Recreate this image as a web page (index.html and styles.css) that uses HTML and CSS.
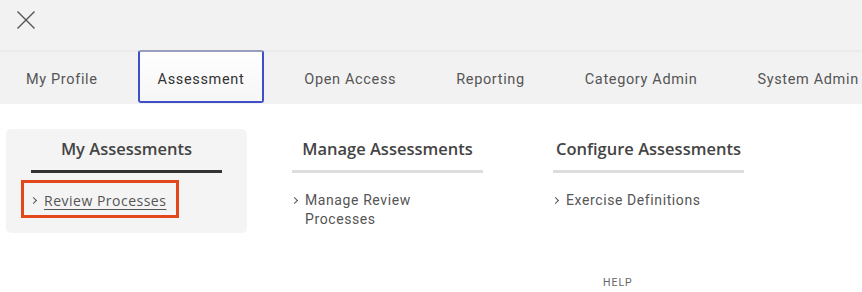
FILE: index.html
```html
<!DOCTYPE html>
<html lang="en">
<head>
  <meta charset="UTF-8">
  <meta name="viewport" content="width=device-width, initial-scale=1.0">
  <title>Assessment Menu</title>
  <link rel="stylesheet" href="styles.css">
</head>
<body>
  <header class="topbar">
    <button class="close-btn" aria-label="Close">
      <svg width="18" height="18" viewBox="0 0 18 18">
        <path d="M0.5 0.5 L17.5 17.5 M17.5 0.5 L0.5 17.5" stroke="#555" stroke-width="1.4" fill="none"/>
      </svg>
    </button>
  </header>

  <nav class="tabs">
    <a class="tab" href="#">My Profile</a>
    <a class="tab active" href="#">Assessment</a>
    <a class="tab" href="#">Open Access</a>
    <a class="tab" href="#">Reporting</a>
    <a class="tab" href="#">Category Admin</a>
    <a class="tab" href="#">System Admin</a>
  </nav>

  <main class="menu">
    <section class="menu-col current">
      <h2>My Assessments</h2>
      <div class="rule"></div>
      <ul>
        <li><a class="item focused" href="#"><span class="chev"></span><span class="label">Review Processes</span></a></li>
      </ul>
    </section>
    <section class="menu-col">
      <h2>Manage Assessments</h2>
      <div class="rule"></div>
      <ul>
        <li><a class="item" href="#"><span class="chev"></span><span class="label">Manage Review<br>Processes</span></a></li>
      </ul>
    </section>
    <section class="menu-col">
      <h2>Configure Assessments</h2>
      <div class="rule"></div>
      <ul>
        <li><a class="item" href="#"><span class="chev"></span><span class="label">Exercise Definitions</span></a></li>
      </ul>
    </section>
  </main>

  <footer class="help">HELP</footer>
</body>
</html>
```

FILE: styles.css
```css
body {
  margin: 0;
  background: #fff;
  font-family: Roboto, "Liberation Sans", sans-serif;
  color: #555;
  overflow: hidden;
}

.topbar {
  height: 50px;
  box-sizing: border-box;
  padding: 11px 0 0 17px;
  background: #f2f2f2;
  box-shadow: 0 1px 3px rgba(0, 0, 0, 0.06);
  position: relative;
  z-index: 1;
}

.close-btn {
  border: none;
  background: none;
  padding: 0;
  display: block;
  cursor: pointer;
}

.close-btn svg {
  display: block;
}

.tabs {
  display: flex;
  align-items: flex-start;
  gap: 20px;
  height: 54px;
  padding-left: 6px;
  background: #f2f2f2;
  white-space: nowrap;
}

.tab {
  display: flex;
  align-items: center;
  box-sizing: border-box;
  height: 53px;
  padding: 5px 18px 0;
  font-size: 14.5px;
  letter-spacing: 0.65px;
  color: #555;
  text-decoration: none;
  border: 2px solid transparent;
}

.tab.active {
  border-color: #3f50c6;
  border-top-color: #9da3c2;
  border-radius: 3px;
  background: linear-gradient(#fff, #f6f6f6);
  color: #333;
}

.menu {
  display: flex;
  align-items: flex-start;
  gap: 20px;
  padding: 25px 0 0 6px;
}

.menu-col {
  width: 191px;
  padding: 9px 25px 15px;
  border-radius: 5px;
}

.menu-col.current {
  background: #f4f4f4;
}

.menu-col h2 {
  margin: 0;
  font-family: "Open Sans", sans-serif;
  font-weight: 600;
  font-size: 16.5px;
  line-height: 22px;
  color: #444;
  text-align: center;
  white-space: nowrap;
}

.rule {
  height: 3px;
  margin-top: 10px;
  background: #ddd;
}

.menu-col.current .rule {
  background: #333;
}

.menu-col ul {
  list-style: none;
  margin: 7px 0 0;
  padding: 0;
}

.item {
  display: inline-flex;
  align-items: flex-start;
  margin-left: -10px;
  padding: 8px 10px 5px 7px;
  border: 3px solid transparent;
  font-size: 14px;
  line-height: 19px;
  letter-spacing: 0.6px;
  color: #555;
  text-decoration: none;
}

.item.focused {
  border-color: #e2481c;
  font-family: "Open Sans", sans-serif;
  letter-spacing: 0.5px;
}

.item.focused .label {
  text-decoration: underline;
  text-underline-offset: 3px;
}

.chev {
  flex: none;
  width: 4px;
  height: 4px;
  margin: 7px 8px 0 0;
  border-top: 1px solid #555;
  border-right: 1px solid #555;
  transform: rotate(45deg);
}

.help {
  margin: 24px 0 0 603px;
  font-size: 10.5px;
  line-height: 13px;
  letter-spacing: 1px;
  color: #666;
}
```
